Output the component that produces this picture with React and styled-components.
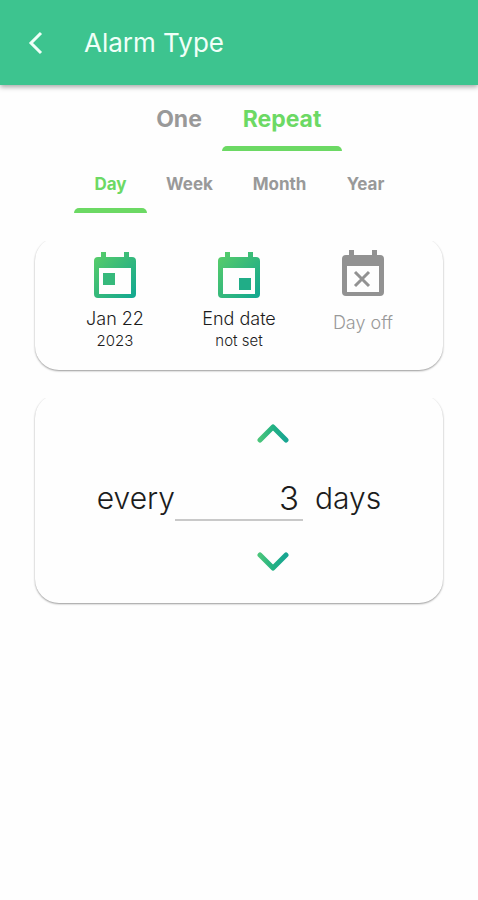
import React, { useState } from "react";
import styled, { createGlobalStyle } from "styled-components";


const GlobalStyle = createGlobalStyle`
    * {
        box-sizing: border-box;
    }

    body {
        margin: 0;
        background: #fefefe;
        font-family: Inter, "Liberation Sans", sans-serif;
        color: #1c1c1c;
    }

    button, input {
        font: inherit;
        color: inherit;
        border: none;
        background: none;
        padding: 0;
        cursor: pointer;
    }
`;

const Header = styled.header`
    height: 85px;
    padding: 0 28px;
    display: flex;
    align-items: center;
    gap: 40px;
    background: #3dc48f;
    color: #f0fff8;
    box-shadow: 0 2px 5px rgba(0, 0, 0, 0.35);
`;

const BackButton = styled.button`
    width: 16px;
    height: 24px;
    display: flex;
`;

const Title = styled.h1`
    margin: 0;
    font-size: 26px;
    line-height: 32px;
    font-weight: 400;
`;

const Tabs = styled.nav`
    display: flex;
    justify-content: center;
`;

const Tab = styled.button`
    min-width: ${(props) => props.$width}px;
    height: ${(props) => (props.$large ? 66 : 62)}px;
    display: flex;
    flex-direction: column;
    align-items: center;
    justify-content: space-between;
    padding-top: ${(props) => (props.$large ? 20 : 21)}px;

    font-size: ${(props) => (props.$large ? 23 : 17)}px;
    line-height: ${(props) => (props.$large ? 28 : 24)}px;
    font-weight: 700;
    color: ${(props) => (props.$active ? "#6cd964" : "#999999")};

    &::after {
        content: "";
        width: 100%;
        height: 5px;
        border-radius: 5px 5px 0 0;
        background: ${(props) => (props.$active ? "#6cd964" : "transparent")};
    }
`;

const Content = styled.main`
    padding: 24px 35px;
    display: flex;
    flex-direction: column;
    gap: 24px;
`;

const Card = styled.section`
    border-radius: 24px;
    background: #fefefe;
    box-shadow: 0 1px 2px rgba(0, 0, 0, 0.4);
    clip-path: inset(4px -4px -4px -4px);
`;

const Dates = styled(Card)`
    display: grid;
    grid-template-columns: repeat(3, 124px);
    justify-content: center;
    align-items: start;
    padding: 12px 0 18px;
`;

const DateButton = styled.button`
    display: flex;
    flex-direction: column;
    align-items: center;
    padding-top: ${(props) => (props.$off ? 0 : 2)}px;
    color: ${(props) => (props.$off ? "#999999" : "#1c1c1c")};

    svg {
        margin-bottom: ${(props) => (props.$off ? 15 : 9)}px;
    }
`;

const DateTitle = styled.span`
    font-size: 18px;
    line-height: 22px;
    font-weight: 300;
`;

const DateNote = styled.span`
    font-size: 15px;
    line-height: 22px;
    font-weight: 300;
`;

const Interval = styled(Card)`
    display: grid;
    grid-template-columns: 80px 128px 80px;
    align-items: center;
    justify-content: center;
    padding: 22px 0 24px;
    font-size: 30px;
    line-height: 36px;
    font-weight: 300;
`;

const StepButton = styled.button`
    grid-column: 1 / 3;
    justify-self: end;
    height: 34px;
    display: flex;
    align-items: center;
    padding-right: 14px;
`;

const Prefix = styled.label`
    grid-column: 1;
    text-align: right;
`;

const Unit = styled.span`
    padding-left: 12px;
`;

const Amount = styled.input`
    width: 100%;
    height: 48px;
    margin: 23px 0 24px;
    padding: 4px 4px 0;
    font-size: 33px;
    text-align: right;
    border-bottom: 2px solid #c9c9c9;
    border-radius: 0;
    outline: none;
`;


function CalendarIcon({ kind }) {
    const fill = kind === "off" ? "#929292" : `url(#calendar-${kind})`;

    return (
        <svg width="44" height="48" viewBox="0 0 44 48" aria-hidden="true">
            <defs>
                <linearGradient id={`calendar-${kind}`} x1="0" y1="0" x2="1" y2="1">
                    <stop offset="0" stopColor="#5bcf68" />
                    <stop offset="0.5" stopColor="#36b97b" />
                    <stop offset="1" stopColor="#10a792" />
                </linearGradient>
            </defs>
            <path
                fill={fill}
                fillRule="evenodd"
                d="M8 1h5v5h18V1h5v5h3a4 4 0 0 1 4 4v33a4 4 0 0 1-4 4H5a4 4 0 0 1-4-4V10a4 4 0 0 1 4-4h3zM6 17v26h32V17z"
            />
            {kind === "start" && <path fill="#36b97b" d="M10 22h12v12H10z" />}
            {kind === "end" && <path fill="#20ad87" d="M22 27h12v12H22z" />}
            {kind === "off" && (
                <path d="M14 23l14 14M28 23L14 37" stroke="#929292" strokeWidth="3" />
            )}
        </svg>
    );
}

function Chevron({ direction }) {
    const d = direction === "up" ? "M3 17L16 4l13 13" : "M3 3l13 13L29 3";

    return (
        <svg width="32" height="20" viewBox="0 0 32 20" fill="none" aria-hidden="true">
            <defs>
                <linearGradient id={`chevron-${direction}`} x1="0" y1="0" x2="1" y2="0">
                    <stop offset="0" stopColor="#4ac57b" />
                    <stop offset="0.5" stopColor="#22b183" />
                    <stop offset="1" stopColor="#18a592" />
                </linearGradient>
            </defs>
            <path
                d={d}
                stroke={`url(#chevron-${direction})`}
                strokeWidth="5"
                strokeLinecap="round"
                strokeLinejoin="round"
            />
        </svg>
    );
}

const types = [
    { label: "One", width: 86 },
    { label: "Repeat", width: 120 },
];

const periods = [
    { label: "Day", width: 73 },
    { label: "Week", width: 85 },
    { label: "Month", width: 95 },
    { label: "Year", width: 77 },
];

export default function App() {
    const [type, setType] = useState("Repeat");
    const [period, setPeriod] = useState("Day");
    const [amount, setAmount] = useState(3);

    return (
        <>
            <GlobalStyle />
            <Header>
                <BackButton aria-label="Back">
                    <svg width="16" height="24" viewBox="0 0 16 24" fill="none">
                        <path d="M13 2L3 12l10 10" stroke="#f0fff8" strokeWidth="3" />
                    </svg>
                </BackButton>
                <Title>Alarm Type</Title>
            </Header>

            <Tabs>
                {types.map(({ label, width }) => (
                    <Tab key={label} $large $width={width} $active={type === label} onClick={() => setType(label)}>
                        {label}
                    </Tab>
                ))}
            </Tabs>
            <Tabs>
                {periods.map(({ label, width }) => (
                    <Tab key={label} $width={width} $active={period === label} onClick={() => setPeriod(label)}>
                        {label}
                    </Tab>
                ))}
            </Tabs>

            <Content>
                <Dates>
                    <DateButton>
                        <CalendarIcon kind="start" />
                        <DateTitle>Jan 22</DateTitle>
                        <DateNote>2023</DateNote>
                    </DateButton>
                    <DateButton>
                        <CalendarIcon kind="end" />
                        <DateTitle>End date</DateTitle>
                        <DateNote>not set</DateNote>
                    </DateButton>
                    <DateButton $off>
                        <CalendarIcon kind="off" />
                        <DateTitle>Day off</DateTitle>
                    </DateButton>
                </Dates>

                <Interval>
                    <StepButton aria-label="More days" onClick={() => setAmount(Number(amount) + 1)}>
                        <Chevron direction="up" />
                    </StepButton>
                    <Prefix htmlFor="amount">every</Prefix>
                    <Amount
                        id="amount"
                        inputMode="numeric"
                        value={amount}
                        onChange={(e) => setAmount(e.target.value)}
                    />
                    <Unit>days</Unit>
                    <StepButton aria-label="Fewer days" onClick={() => setAmount(Math.max(1, Number(amount) - 1))}>
                        <Chevron direction="down" />
                    </StepButton>
                </Interval>
            </Content>
        </>
    );
}
